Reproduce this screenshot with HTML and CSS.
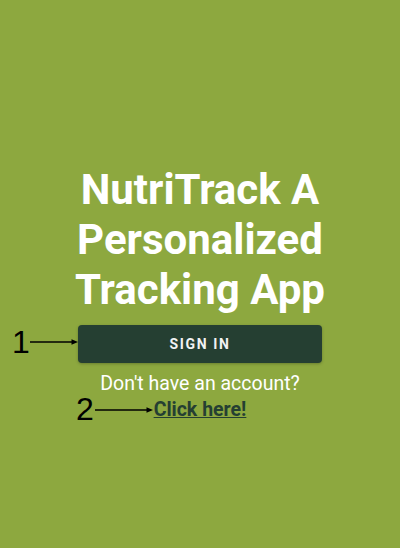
FILE: index.html
```html
<!DOCTYPE html>
<html>
<head>
<meta charset="utf-8">
<link rel="stylesheet" href="styles.css">
</head>
<body>
<main class="screen">
  <h1 class="title">NutriTrack A Personalized Tracking App</h1>
  <div class="actions">
    <button class="signin">SIGN IN</button>
    <p class="prompt">Don't have an account?</p>
    <a class="link" href="#">Click here!</a>
    <span class="num num-1">1</span>
    <svg class="arrow arrow-1" width="48" height="8" viewBox="0 0 48 8"><line x1="0" y1="4" x2="44" y2="4" stroke="#000" stroke-width="1.3"/><path d="M41.5 1.2 L48 4 L41.5 6.8 Z" fill="#000"/></svg>
    <span class="num num-2">2</span>
    <svg class="arrow arrow-2" width="58" height="8" viewBox="0 0 58 8"><line x1="0" y1="4" x2="54" y2="4" stroke="#000" stroke-width="1.3"/><path d="M51.5 1.2 L58 4 L51.5 6.8 Z" fill="#000"/></svg>
  </div>
</main>
</body>
</html>
```
FILE: styles.css
```css
html, body {
  margin: 0;
  padding: 0;
}
body {
  background: #8da83f;
  width: 400px;
  height: 548px;
  overflow: hidden;
  font-family: Roboto, "Noto Sans", sans-serif;
}
.screen {
  display: flex;
  flex-direction: column;
  align-items: center;
  padding-top: 165px;
}
.title {
  margin: 0;
  width: 280px;
  text-align: center;
  color: #ffffff;
  font-size: 42px;
  font-weight: 700;
  line-height: 50px;
}
.actions {
  position: relative;
  display: flex;
  flex-direction: column;
  align-items: center;
  margin-top: 10px;
}
.signin {
  width: 244px;
  height: 38px;
  border: none;
  border-radius: 4px;
  background: #253f32;
  color: #f2f2f2;
  font-family: Roboto, sans-serif;
  font-weight: 700;
  font-size: 14px;
  letter-spacing: 1.6px;
  box-shadow: 0 1px 3px rgba(0,0,0,0.25);
}
.prompt {
  margin: 9px 0 0;
  color: #ffffff;
  font-size: 19.5px;
  line-height: 23px;
}
.link {
  margin-top: 3px;
  color: #253f32;
  font-size: 19.5px;
  font-weight: 700;
  line-height: 23px;
  text-decoration: underline;
}
.num {
  position: absolute;
  font-family: "Liberation Sans", sans-serif;
  font-size: 32px;
  line-height: 32px;
  color: #000;
}
.num-1 {
  left: -66px;
  top: 1px;
}
.num-2 {
  left: -2px;
  top: 68px;
}
.arrow {
  position: absolute;
  display: block;
}
.arrow-1 {
  left: -48px;
  top: 13px;
}
.arrow-2 {
  left: 17px;
  top: 81px;
}
```
